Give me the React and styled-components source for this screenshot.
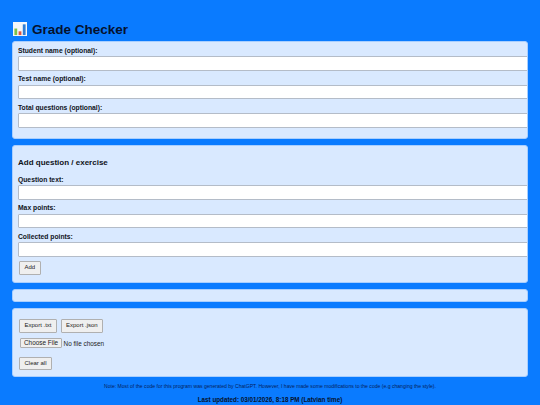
import styled, { createGlobalStyle } from 'styled-components'

const GlobalStyle = createGlobalStyle`
    html, body {
        margin: 0;
        padding: 0;
        background: #0a7bff;
    }
    body {
        font-family: "Liberation Sans", Arial, sans-serif;
        color: #10131a;
    }
`

const Page = styled.div`
    width: 540px;
    height: 405px;
    box-sizing: border-box;
    padding: 20px 12px 0;
    overflow: hidden;
`

const Title = styled.h1`
    display: flex;
    align-items: center;
    gap: 5px;
    height: 18px;
    margin: 0 0 3px 1px;
    font-size: 13.5px;
    font-weight: bold;
    color: #05122e;
`

const Panel = styled.section`
    box-sizing: border-box;
    height: ${p => p.$height}px;
    margin-bottom: 6px;
    padding: ${p => p.$top || 4.5}px 0 0 5px;
    background: #d9e9ff;
    border: 1px solid #a9cfff;
    border-radius: 3px;
    overflow: hidden;
`

const Label = styled.label`
    display: block;
    height: 8px;
    margin-bottom: 1.5px;
    font-size: 6.75px;
    line-height: 8px;
    font-weight: bold;
`

const Field = styled.input`
    display: block;
    box-sizing: border-box;
    width: 520px;
    height: 14.5px;
    margin: 0 0 4.5px;
    padding: 0 3px;
    background: #fff;
    border: 1px solid #b4bcc8;
    border-radius: 1px;
    outline: none;
`

const Heading = styled.h2`
    height: 10px;
    margin: 0 0 7.5px;
    font-size: 8px;
    line-height: 10px;
    font-weight: bold;
`

const Button = styled.button`
    box-sizing: border-box;
    height: 13.5px;
    padding: 0 4.5px;
    font-family: inherit;
    font-size: 6px;
    line-height: 11px;
    color: #222;
    background: #efefef;
    border: 1px solid #b0b0b0;
    border-radius: 1px;
`

const AddButton = styled(Button)`
    display: block;
    margin: 1.5px 0 0 1px;
`

const ButtonRow = styled.div`
    display: flex;
    gap: 3.5px;
    margin-left: 1px;
`

const FileRow = styled.div`
    display: flex;
    align-items: center;
    gap: 1.5px;
    height: 11px;
    margin: 5px 0 8px;
    font-size: 6.4px;
    color: #222;
`

const FileButton = styled(Button)`
    height: 10.5px;
    margin-left: 2px;
    padding: 0 3px;
    font-size: 6.4px;
    line-height: 8px;
`

const ClearButton = styled(Button)`
    display: block;
    margin-left: 1px;
`

const Note = styled.p`
    margin: 5px 0 0;
    font-size: 5.08px;
    line-height: 7px;
    text-align: center;
    color: #05225c;
`

const Updated = styled.p`
    margin: 5.8px 0 0;
    font-size: 6.3px;
    line-height: 8px;
    font-weight: bold;
    text-align: center;
    color: #05122e;
`

const ChartIcon = () => (
    <svg width="14" height="14" viewBox="0 0 15 15">
        <rect width="15" height="15" fill="#f4f7fa" />
        <rect x="1.5" y="7" width="3" height="7" fill="#7cc04b" />
        <rect x="6" y="10" width="3" height="4" fill="#e0533d" />
        <rect x="10.5" y="2.5" width="3" height="11.5" fill="#2f7fd6" />
    </svg>
)

const App = () => {
    return (
        <Page>
            <GlobalStyle />
            <Title><ChartIcon />Grade Checker</Title>
            <Panel $height={97.5}>
                <Label>Student name (optional):</Label>
                <Field />
                <Label>Test name (optional):</Label>
                <Field />
                <Label>Total questions (optional):</Label>
                <Field />
            </Panel>
            <Panel $height={138.5} $top={12.5}>
                <Heading>Add question / exercise</Heading>
                <Label>Question text:</Label>
                <Field />
                <Label>Max points:</Label>
                <Field />
                <Label>Collected points:</Label>
                <Field />
                <AddButton>Add</AddButton>
            </Panel>
            <Panel $height={13} />
            <Panel $height={69} $top={10}>
                <ButtonRow>
                    <Button>Export .txt</Button>
                    <Button>Export .json</Button>
                </ButtonRow>
                <FileRow>
                    <FileButton>Choose File</FileButton>
                    No file chosen
                </FileRow>
                <ClearButton>Clear all</ClearButton>
            </Panel>
            <Note>Note: Most of the code for this program was generated by ChatGPT. However, I have made some modifications to the code (e.g changing the style).</Note>
            <Updated>Last updated: 03/01/2026, 8:18 PM (Latvian time)</Updated>
        </Page>
    )
}

export default App
